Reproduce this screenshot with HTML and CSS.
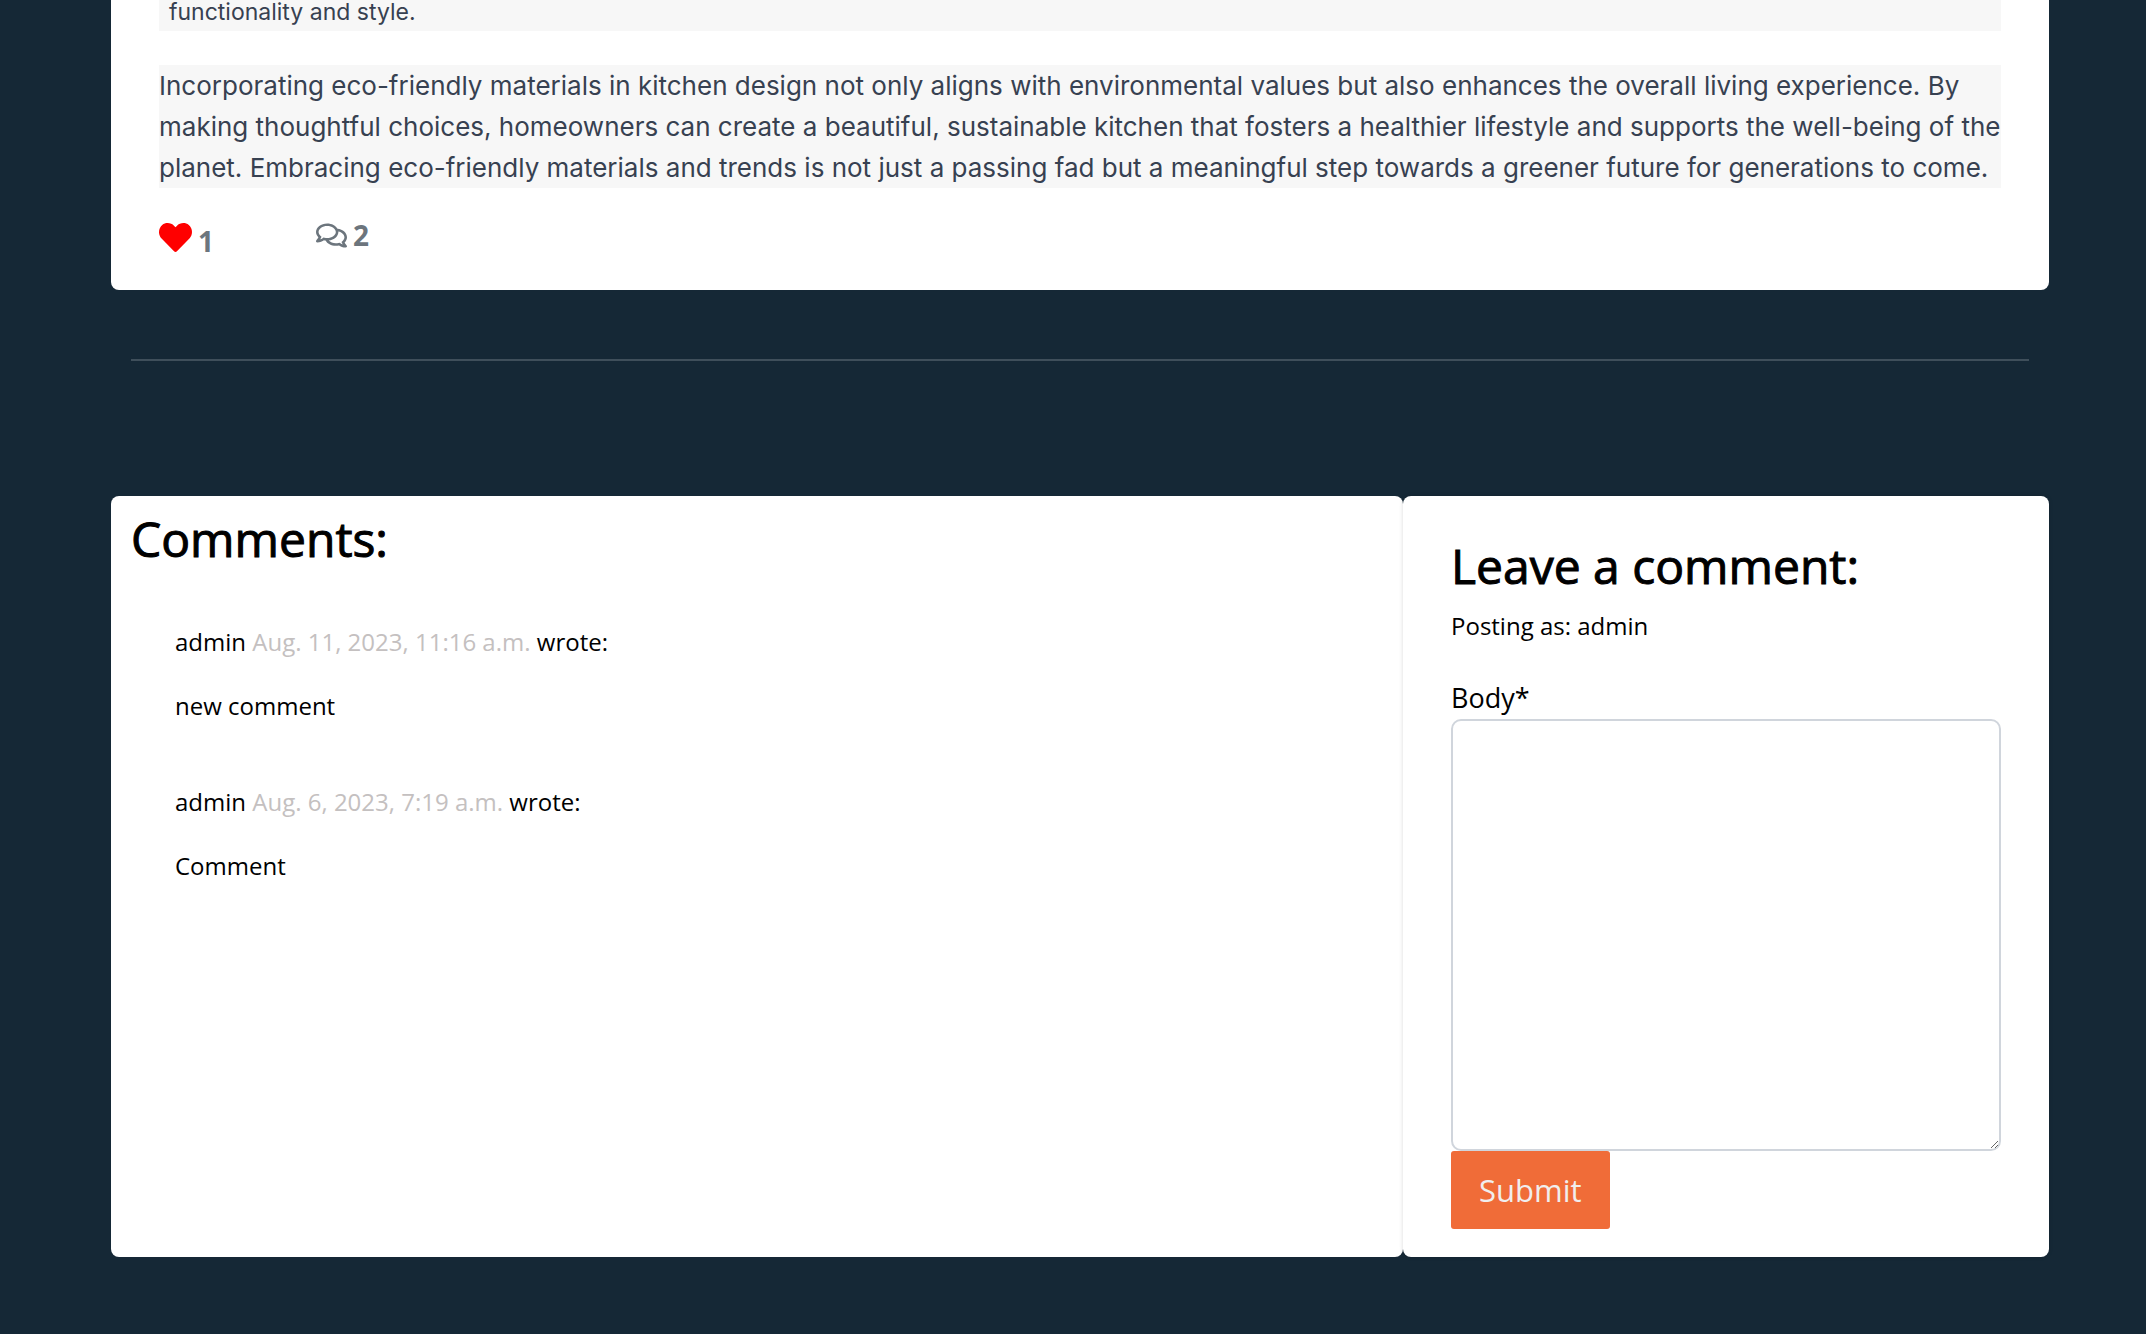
FILE: index.html
```html
<!DOCTYPE html>
<html lang="en">
<head>
<meta charset="utf-8">
<meta name="viewport" content="width=device-width, initial-scale=1">
<title>Eco-friendly kitchens</title>
<link rel="stylesheet" href="styles.css">
</head>
<body>
<main class="container">
  <article class="card post">
    <p class="post-item">functionality and style.</p>
    <p class="post-text">Incorporating eco-friendly materials in kitchen design not only aligns with environmental values but also enhances the overall living experience. By<br>
    making thoughtful choices, homeowners can create a beautiful, sustainable kitchen that fosters a healthier lifestyle and supports the well-being of the<br>
    planet. Embracing eco-friendly materials and trends is not just a passing fad but a meaningful step towards a greener future for generations to come.</p>
    <div class="reactions">
      <button class="like" type="button" aria-label="Like">
        <svg class="heart" viewBox="0 32 512 448" aria-hidden="true"><path d="M462.3 62.6C407.5 15.9 326 24.3 275.7 76.2L256 96.5l-19.7-20.3C186.1 24.3 104.5 15.9 49.7 62.6c-62.8 53.6-66.1 149.8-9.9 207.9l193.5 199.8c12.5 12.9 32.8 12.9 45.3 0l193.5-199.8c56.3-58.1 53-154.3-9.8-207.9z"/></svg>
        <span>1</span>
      </button>
      <div class="count">
        <svg class="bubbles" viewBox="0 32 576 448" aria-hidden="true"><path d="M532 386.2c27.5-27.1 44-61.1 44-98.2 0-80-76.5-146.1-176.2-157.9C368.3 72.5 294.3 32 208 32 93.1 32 0 103.6 0 192c0 37 16.5 71 44 98.2-15.3 30.7-37.3 54.5-37.7 54.9-6.3 6.7-8.1 16.5-4.4 25 3.6 8.5 12 14 21.2 14 53.5 0 96.7-20.2 125.2-38.8 9.2 2.1 18.7 3.7 28.4 4.9C208.1 407.6 281.8 448 368 448c20.8 0 40.8-2.4 59.8-6.8C456.3 459.7 499.4 480 553 480c9.2 0 17.5-5.5 21.2-14 3.6-8.5 1.9-18.3-4.4-25-.4-.3-22.5-24.1-37.8-54.8zm-392.8-92.3L122.1 305c-14.1 9.1-28.5 16.3-43.1 21.4 2.7-4.7 5.4-9.7 8-14.8l15.5-31.1L77.7 256C64.2 242.6 48 220.7 48 192c0-60.7 73.3-112 160-112s160 51.3 160 112-73.3 112-160 112c-16.5 0-33-1.9-49-5.6l-19.8-4.5zM498.3 352l-24.7 24.4 15.5 31.1c2.6 5.1 5.3 10.1 8 14.8-14.6-5.1-29-12.3-43.1-21.4l-17.1-11.1-19.9 4.6c-16 3.7-32.5 5.6-49 5.6-54 0-102.2-20.1-131.3-49.7C338 339.5 416 272.9 416 192c0-3.4-.4-6.7-.7-10C479.7 196.5 528 238.8 528 288c0 28.7-16.2 50.6-29.7 64z"/></svg>
        <span>2</span>
      </div>
    </div>
  </article>
  <hr class="divider">
  <div class="discussion">
    <section class="card comments">
      <h3 class="title">Comments:</h3>
      <div class="comment-list">
        <div class="comment">
          <p>admin <span class="date">Aug. 11, 2023, 11:16 a.m.</span> wrote:</p>
          <p>new comment</p>
        </div>
        <div class="comment">
          <p>admin <span class="date">Aug. 6, 2023, 7:19 a.m.</span> wrote:</p>
          <p>Comment</p>
        </div>
      </div>
    </section>
    <section class="card reply">
      <h3 class="title">Leave a comment:</h3>
      <p class="author">Posting as: admin</p>
      <form class="form">
        <label for="body">Body*</label>
        <textarea id="body" name="body" rows="10" required></textarea>
        <button class="submit" type="submit">Submit</button>
      </form>
    </section>
  </div>
</main>
</body>
</html>
```

FILE: styles.css
```css
* { box-sizing: border-box; }

body {
  margin: 0;
  background: #152836;
  color: #000;
  font-family: "Open Sans", sans-serif;
  font-size: 24px;
  line-height: 36px;
}

p, h3 { margin: 0; }

.container { padding: 0 97px 77px 111px; }

.card {
  background: #fff;
  border-radius: 8px;
}

.post {
  padding: 0 48px 31px;
  border-radius: 0 0 8px 8px;
}

.post-item,
.post-text {
  background: #f7f7f7;
  color: #374151;
  font-family: Inter, sans-serif;
}

.post-item {
  padding: 0 10px 6px;
  font-size: 23px;
  line-height: 25px;
}

.post-text {
  margin-top: 34px;
  font-size: 26px;
  line-height: 41px;
}

@media (min-width: 2100px) {
  .post-text { white-space: nowrap; }
}

@media (max-width: 2099px) {
  .post-text br { display: none; }
}

.reactions {
  display: flex;
  align-items: flex-start;
  gap: 102px;
  margin-top: 29px;
  color: #6c757d;
  font-size: 28px;
  font-weight: 700;
}

.like,
.count {
  display: flex;
  gap: 6px;
  line-height: 36px;
}

.like {
  padding: 6px 0 0;
  border: 0;
  background: none;
  color: inherit;
  font-family: inherit;
  font-size: inherit;
  font-weight: inherit;
}

.heart {
  width: 33px;
  height: 29px;
  fill: #f00;
}

.bubbles {
  width: 31px;
  height: 25px;
  margin-top: 6px;
  fill: currentColor;
}

.divider {
  height: 2px;
  margin: 69px 20px 135px;
  border: 0;
  background: #3f4f5b;
}

.discussion {
  display: grid;
  grid-template-columns: 2fr 1fr;
}

.title {
  font-size: 48px;
  font-weight: 500;
  line-height: 60px;
  -webkit-text-stroke: 1px currentColor;
}

.comments { padding: 13px 20px; }

.comment-list {
  display: grid;
  gap: 60px;
  padding: 55px 44px 0;
}

.comment {
  display: grid;
  gap: 28px;
}

.date { color: #c4c0c0; }

.reply {
  padding: 40px 48px 28px;
  box-shadow: 0 0 4px rgba(0, 0, 0, 0.15);
}

.author { margin: 12px 0 33px; }

.form {
  display: flex;
  flex-direction: column;
  align-items: flex-start;
  font-size: 27px;
  line-height: 42px;
}

.form textarea {
  display: block;
  width: 100%;
  height: 432px;
  padding: 12px;
  border: 2px solid #d0d5dc;
  border-radius: 10px;
  background: #fff;
  font: inherit;
  resize: vertical;
}

.submit {
  padding: 15px 28px;
  border: 0;
  border-radius: 3px;
  background: #f06c38;
  color: #f0eeee;
  font-family: inherit;
  font-size: 31px;
  line-height: 48px;
}
```
